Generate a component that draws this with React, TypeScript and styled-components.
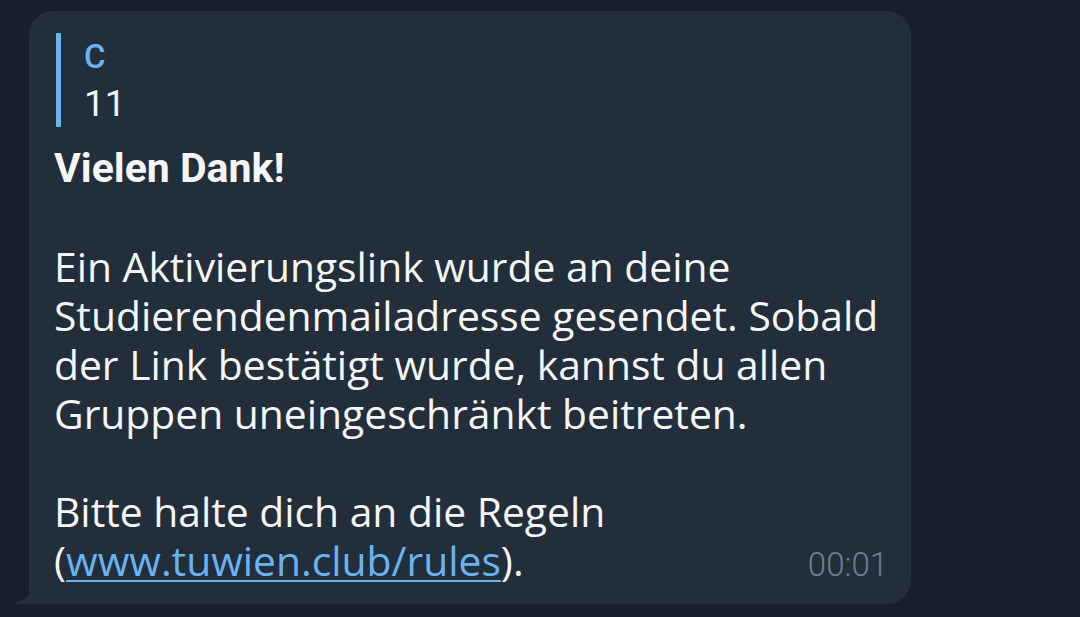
import * as React from "react"
import styled, {createGlobalStyle} from "styled-components"

const GlobalStyle = createGlobalStyle`
  html, body {
    margin: 0;
    padding: 0;
    background: #17202a;
  }
`

const Screen = styled.div`
  width: 1080px;
  height: 617px;
  box-sizing: border-box;
  padding: 11px 0 0 29px;
  background: #17202a;
  overflow: hidden;
`

const Bubble = styled.div`
  position: relative;
  width: 882px;
  height: 593px;
  box-sizing: border-box;
  padding: 22px 23px 0 25px;
  background: #232e3b;
  border-radius: 24px 24px 24px 0;
`

const Tail = styled.svg`
  position: absolute;
  left: -15px;
  bottom: 0;
  width: 16px;
  height: 16px;
`

const Quote = styled.div`
  display: flex;
  margin-left: 2px;
`

const QuoteBar = styled.div`
  width: 5px;
  background: #6ab2f2;
  border-radius: 1px;
`

const QuoteBody = styled.div`
  padding-left: 23px;
  font-family: Roboto, "Noto Sans", sans-serif;
  font-size: 35px;
  line-height: 47px;
`

const QuoteName = styled.div`
  color: #6ab2f2;
  font-weight: 500;
  font-size: 33px;
`

const QuoteText = styled.div`
  color: #f2f4f5;
  font-size: 37px;
`

const Text = styled.div`
  margin-top: 17px;
  font-family: "Open Sans", "Noto Sans", sans-serif;
  font-size: 40.8px;
  line-height: 49px;
  color: #f4f5f6;
  white-space: nowrap;
`

const Title = styled.div`
  font-family: Roboto, "Noto Sans", sans-serif;
  font-weight: 700;
  font-size: 41px;
`

const Blank = styled.div`
  height: 49px;
`

const LastRow = styled.div`
  display: flex;
  justify-content: space-between;
  align-items: flex-end;
`

const Link = styled.a`
  color: #6ab3f3;
  text-decoration: underline;
  text-decoration-thickness: 2px;
  text-underline-offset: 4px;
`

const Time = styled.span`
  font-family: Roboto, "Noto Sans", sans-serif;
  font-weight: 300;
  font-size: 33px;
  line-height: 40px;
  color: #6d7f8f;
`

export default function App() {
  return (
    <Screen>
      <GlobalStyle />
      <Bubble>
        <Quote>
          <QuoteBar />
          <QuoteBody>
            <QuoteName>C</QuoteName>
            <QuoteText>11</QuoteText>
          </QuoteBody>
        </Quote>
        <Text>
          <Title>Vielen Dank!</Title>
          <Blank />
          <div>Ein Aktivierungslink wurde an deine</div>
          <div>Studierendenmailadresse gesendet. Sobald</div>
          <div>der Link bestätigt wurde, kannst du allen</div>
          <div>Gruppen uneingeschränkt beitreten.</div>
          <Blank />
          <div>Bitte halte dich an die Regeln</div>
          <LastRow>
            <span>(<Link href="#">www.tuwien.club/rules</Link>).</span>
            <Time>00:01</Time>
          </LastRow>
        </Text>
        <Tail viewBox="0 0 16 16">
          <path d="M16 0 C16 7 12 12 2 14.2 Q0 14.8 1 16 L16 16 Z" fill="#232e3b" />
        </Tail>
      </Bubble>
    </Screen>
  )
}
